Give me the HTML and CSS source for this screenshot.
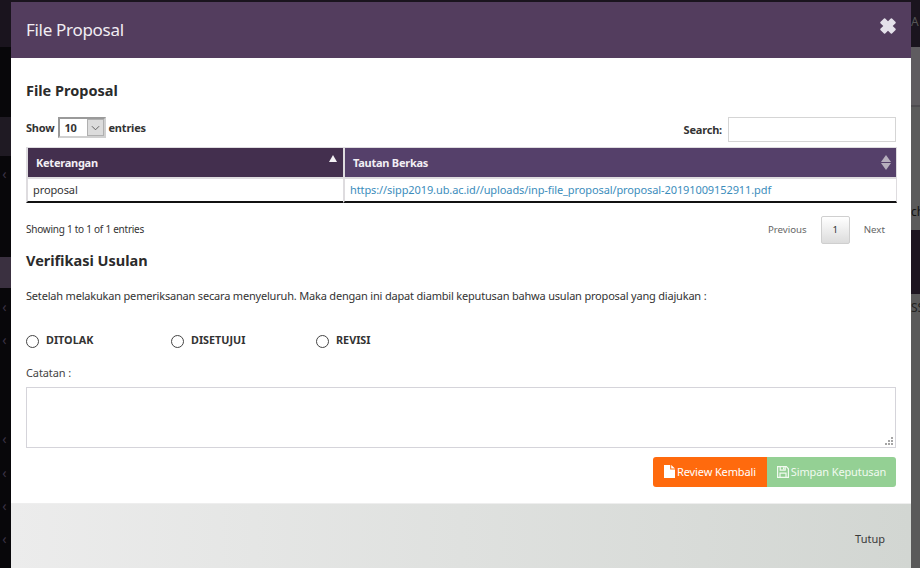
FILE: index.html
```html
<!DOCTYPE html>
<html lang="id">
<head>
<meta charset="utf-8">
<title>File Proposal</title>
<link rel="stylesheet" href="styles.css">
</head>
<body>
<div class="backdrop">
  <div class="bg-top"></div>
  <div class="bg-block b1"></div>
  <div class="bg-block b2"></div>
  <div class="chev c1">‹</div>
  <div class="chev c2">‹</div>
  <div class="chev c3">‹</div>
  <div class="chev c4">‹</div>
  <div class="chev c5">‹</div>
  <div class="chev c6">‹</div>
  <div class="chev c7">‹</div>
  <div class="bg-right r1"></div>
  <div class="bg-right r2"></div>
  <div class="bg-right r3"></div>
  <div class="bg-right r4"></div>
  <div class="peek p0">A</div>
  <div class="peek p1">ch</div>
  <div class="peek p2">SS</div>
</div>
<div class="modal">
  <header class="modal-head">
    <h4 class="modal-title">File Proposal</h4>
    <svg class="close-x" viewBox="0 0 16 16" aria-hidden="true"><path d="M0.4 4 4 0.4Q4.6 0 5.2 0.4L8 3.3 10.8 0.4Q11.4 0 12 0.4L15.6 4Q16 4.6 15.6 5.2L12.7 8 15.6 10.8Q16 11.4 15.6 12L12 15.6Q11.4 16 10.8 15.6L8 12.7 5.2 15.6Q4.6 16 4 15.6L0.4 12Q0 11.4 0.4 10.8L3.3 8 0.4 5.2Q0 4.6 0.4 4z"/></svg>
  </header>
  <main class="modal-body">
    <h5 class="section-title first">File Proposal</h5>
    <div class="table-top">
      <div class="len">Show <span class="select"><span class="sel-val">10</span><span class="sel-btn"><svg viewBox="0 0 10 6"><path d="M1 1l4 4 4-4"/></svg></span></span> entries</div>
      <div class="search">Search: <span class="search-input"></span></div>
    </div>
    <table class="data">
      <thead>
        <tr>
          <th class="dark col1">Keterangan<span class="sort-up"></span></th>
          <th class="col2">Tautan Berkas<span class="sort-both"><i class="up"></i><i class="down"></i></span></th>
        </tr>
      </thead>
      <tbody>
        <tr>
          <td class="col1">proposal</td>
          <td class="col2"><a href="#">https://sipp2019.ub.ac.id//uploads/inp-file_proposal/proposal-20191009152911.pdf</a></td>
        </tr>
      </tbody>
    </table>
    <div class="table-bottom">
      <div class="info">Showing 1 to 1 of 1 entries</div>
      <div class="paging"><span class="pg">Previous</span><span class="pg cur">1</span><span class="pg">Next</span></div>
    </div>
    <h5 class="section-title second">Verifikasi Usulan</h5>
    <p class="lead">Setelah melakukan pemeriksanan secara menyeluruh. Maka dengan ini dapat diambil keputusan bahwa usulan proposal yang diajukan :</p>
    <div class="radios">
      <label class="radio"><span class="dot"></span>DITOLAK</label>
      <label class="radio"><span class="dot"></span>DISETUJUI</label>
      <label class="radio"><span class="dot"></span>REVISI</label>
    </div>
    <div class="note-label">Catatan :</div>
    <div class="note">
      <svg class="grip" viewBox="0 0 9 9"><path d="M7 1h2v2H7zM4 4h2v2H4zM7 4h2v2H7zM1 7h2v2H1zM4 7h2v2H4zM7 7h2v2H7z"/></svg>
    </div>
    <div class="actions">
      <span class="btn orange"><svg class="ico file" viewBox="0 0 11 13"><path d="M0 0h6.2v4.6h4.8V13H0zM7.2 0 11 3.6H7.2z"/></svg>Review Kembali</span>
      <span class="btn green"><svg class="ico save" viewBox="0 0 12 12"><path fill-rule="evenodd" d="M0 0h9.6L12 2.4V12H0zM1.2 1.2v9.6h1.2V6.6h7.2v4.2h1.2V2.9L9.1 1.2H8.8v3.6H2.6V1.2zM3.8 1.2v2.4h3.8V1.2zM6 1.6h1.2v1.6H6zM3.6 7.8v3h4.8v-3z"/></svg>Simpan Keputusan</span>
    </div>
  </main>
  <footer class="modal-foot"><span class="tutup">Tutup</span></footer>
</div>
</body>
</html>
```
FILE: styles.css
```css
* { box-sizing: border-box; }
html, body { margin: 0; height: 100%; }
body {
  width: 920px; height: 568px; overflow: hidden; position: relative;
  background: #08070a;
  font-family: "Noto Sans", sans-serif;
  color: #333;
}
.backdrop { position: absolute; inset: 0; overflow: hidden; }
.bg-top { position: absolute; left: 0; right: 0; top: 0; height: 47px; background: #1a141e; }
.bg-block { position: absolute; left: 0; width: 11px; }
.b1 { top: 117px; height: 39px; background: #1f1a23; }
.b2 { top: 257px; height: 31px; background: #3a3040; }
.chev { position: absolute; left: 0; width: 9px; text-align: center; font-size: 14px; line-height: 14px; color: #3b3346; }
.c1 { top: 167px; } .c2 { top: 300px; } .c3 { top: 333px; } .c4 { top: 432px; } .c5 { top: 466px; } .c6 { top: 499px; } .c7 { top: 532px; }
.bg-right { position: absolute; left: 911px; right: 0; }
.r1 { top: 47px; height: 58px; background: #5f5c60; }
.r2 { top: 105px; height: 125px; background: #5b5b5b; border-top: 2px solid #4e4c50; }
.r3 { top: 230px; height: 64px; background: #1d1520; }
.r4 { top: 294px; height: 274px; background: #5a5a5a; }
.peek { position: absolute; left: 911px; font-size: 12px; line-height: 16px; color: #111; white-space: nowrap; }
.p0 { top: 14px; color: #555; }
.p1 { top: 204px; }
.p2 { top: 300px; color: #222; }

.modal { position: absolute; left: 11px; top: 2px; width: 900px; height: 566px; display: flex; flex-direction: column; background: #fff; }
.modal-head { height: 56px; flex: none; background: #533d5e; display: flex; align-items: center; justify-content: space-between; padding: 0 15px; }
.modal-title { margin: 0 0 2px; font-size: 17px; letter-spacing: -0.3px; font-weight: 400; color: #f1edf3; }
.close-x { width: 16px; height: 16px; fill: #e4e1ea; margin-top: -8px; }
.modal-body { flex: 1; padding: 22px 15px 0; }
.section-title { margin: 0; font-size: 14.5px; font-weight: 700; color: #2b2b2b; line-height: 20px; }
.table-top { display: flex; justify-content: space-between; align-items: flex-start; margin-top: 17px; height: 30px; font-size: 11px; letter-spacing: -0.2px; font-weight: 700; color: #333; }
.len { display: flex; align-items: center; gap: 4px; height: 21px; }
.select { display: inline-flex; width: 48px; height: 21px; margin-right: -2px; border: 2px solid #d0d0d0; border-left-color: #9a9a9a; border-top-color: #9a9a9a; align-items: center; justify-content: space-between; background: #fff; }
.sel-val { padding-left: 4px; }
.sel-btn { width: 17px; height: 17px; background: #dcdcdc; border: 1px solid #b0b0b0; display: flex; align-items: center; justify-content: center; }
.sel-btn svg { width: 9px; height: 6px; fill: none; stroke: #555; stroke-width: 1; }
.search { display: flex; align-items: center; gap: 6px; }
.search-input { width: 168px; height: 25px; border: 1px solid #d5d5d5; background: #fff; }
.data { width: 871px; border-collapse: separate; border-spacing: 0; table-layout: fixed; font-size: 11px; }
.data th { height: 32px; padding: 0 0 0 8px; text-align: left; color: #f2eef4; background: #55406a; position: relative; font-weight: 700; letter-spacing: -0.25px; border-style: solid; border-color: #dedcdf; border-width: 1px 0 2px 2px; background-clip: padding-box; }
.data th.dark { background-color: #432f4e; }
.data th.col2 { border-right-width: 1px; }
.data .col1 { width: 317px; }
.data td { height: 24px; padding: 0 0 1px 5px; border-left: 2px solid #dedcdf; border-bottom: 2px solid #111; color: #333; letter-spacing: -0.1px; }
.data td.col2 { border-right: 1px solid #dedcdf; }
.data a { color: #3c8dbc; text-decoration: none; }
.sort-up { position: absolute; right: 6px; top: 7px; width: 0; height: 0; border-left: 4px solid transparent; border-right: 4px solid transparent; border-bottom: 7px solid #f4f2f5; }
.sort-both { position: absolute; right: 5px; top: 7px; display: flex; flex-direction: column; gap: 1px; }
.sort-both i { display: block; width: 0; height: 0; border-left: 5px solid transparent; border-right: 5px solid transparent; }
.sort-both .up { border-bottom: 7px solid #b7afbd; }
.sort-both .down { border-top: 7px solid #b7afbd; }
.table-bottom { display: flex; justify-content: space-between; align-items: center; margin-top: 13px; height: 28px; }
.info { font-size: 10px; letter-spacing: -0.25px; color: #333; padding-bottom: 2px; }
.paging { display: flex; align-items: center; gap: 3px; font-size: 9.7px; color: #666; }
.pg { padding: 0 10px; line-height: 26px; border: 1px solid transparent; }
.pg.cur { width: 29px; height: 28px; padding: 0; text-align: center; color: #333; border-color: #cfcfcf; background: linear-gradient(#fff, #dcdcdc); border-radius: 2px; }
.second { margin-top: 6px; }
.lead { margin: 18px 0 0; font-size: 11px; letter-spacing: -0.19px; line-height: 16px; color: #333; }
.radios { display: flex; margin-top: 28px; height: 16px; }
.radio { display: flex; align-items: center; width: 145px; font-size: 10.8px; line-height: 16px; font-weight: 700; color: #333; gap: 7px; }
.dot { width: 13px; height: 13px; margin: 1px 0 -1px; border: 1px solid #444; border-radius: 50%; background: #fff; }
.note-label { margin-top: 17px; font-size: 11px; letter-spacing: -0.1px; line-height: 16px; color: #444; }
.note { position: relative; margin-top: 6px; height: 61px; border: 1px solid #d5d4da; }
.grip { position: absolute; right: 2px; bottom: 2px; width: 9px; height: 9px; fill: #a5a5a5; }
.actions { display: flex; justify-content: flex-end; margin-top: 9px; }
.btn { display: flex; align-items: center; justify-content: center; height: 30px; padding-bottom: 1px; font-size: 11px; letter-spacing: -0.12px; color: #fff; gap: 2px; }
.orange { width: 114px; background: #ff6a0d; border-radius: 3px 0 0 3px; }
.green { width: 129px; background: #94d094; color: #f1faf0; border-radius: 0 3px 3px 0; }
.ico { fill: currentColor; }
.file { width: 11px; height: 13px; }
.save { width: 12px; height: 12px; }
.modal-foot { height: 65px; flex: none; background: linear-gradient(90deg, #ececec, #d2d6d2); display: flex; justify-content: flex-end; border-top: 1px solid #eee; padding: 27px 26px 0 0; }
.tutup { font-size: 11px; color: #3a3a3a; }
```
